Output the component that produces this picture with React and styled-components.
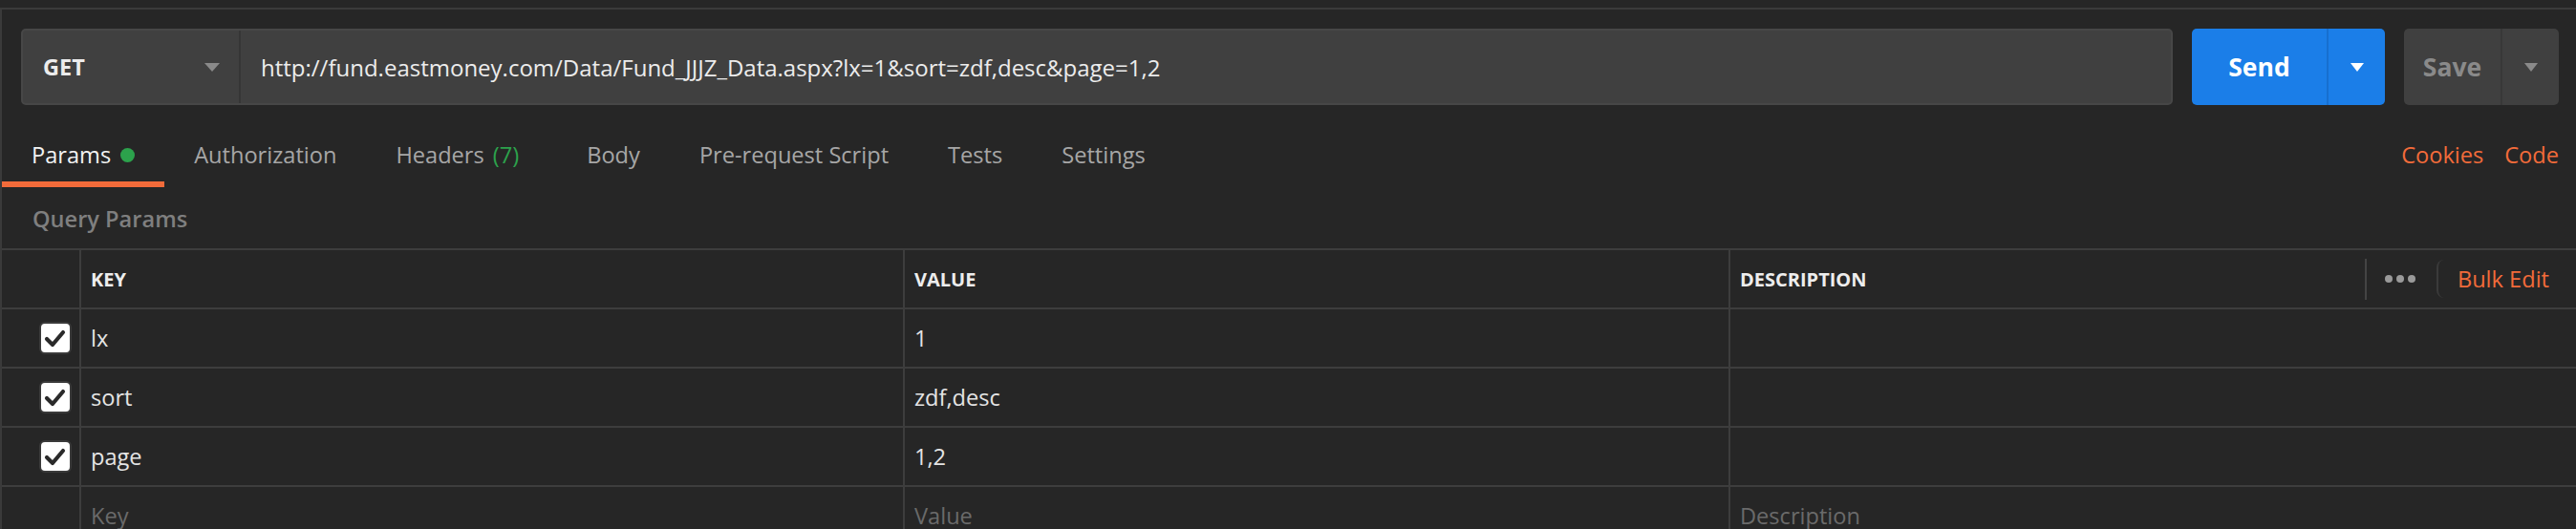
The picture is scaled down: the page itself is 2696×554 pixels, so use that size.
import React from "react";
import styled, { createGlobalStyle } from "styled-components";

const GlobalStyle = createGlobalStyle`
  html, body {
    margin: 0;
    padding: 0;
    background: #262626;
  }
  body {
    font-family: "Open Sans", "DejaVu Sans", sans-serif;
    color: #e6e6e6;
  }
`;

const orange = "#f26b3a";
const green = "#2ca24c";
const line = "#3d3d3d";

const Page = styled.div`
  padding-top: 8px;
  min-height: 554px;
  box-sizing: border-box;
`;

const Panel = styled.div`
  border-top: 2px solid #3a3a3a;
  border-left: 2px solid #3a3a3a;
`;

const RequestBar = styled.div`
  display: flex;
  align-items: stretch;
  gap: 20px;
  padding: 20px 18px 0 20px;
`;

const UrlGroup = styled.div`
  flex: 1;
  display: flex;
  height: 80px;
  box-sizing: border-box;
  background: #404040;
  border: 2px solid #474747;
  border-radius: 5px;
`;

const Method = styled.div`
  width: 228px;
  flex: none;
  display: flex;
  align-items: center;
  justify-content: space-between;
  box-sizing: border-box;
  padding: 0 20px 0 21px;
  border-right: 2px solid #363636;
  font-size: 23.5px;
  font-weight: 700;
  color: #ececec;
`;

const Caret = styled.span`
  width: 0;
  height: 0;
  border-left: ${(p) => p.$w / 2}px solid transparent;
  border-right: ${(p) => p.$w / 2}px solid transparent;
  border-top: 9px solid ${(p) => p.$color};
`;

const UrlText = styled.div`
  flex: 1;
  display: flex;
  align-items: center;
  padding-left: 21px;
  font-size: 24px;
  color: #ececec;
  white-space: nowrap;
  overflow: hidden;
`;

const SplitButton = styled.div`
  display: flex;
  height: 80px;
  border-radius: 5px;
  overflow: hidden;
  background: ${(p) => p.$bg};
`;

const MainPart = styled.div`
  width: ${(p) => p.$w}px;
  display: flex;
  align-items: center;
  justify-content: center;
  font-size: 26.5px;
  font-weight: 700;
  color: ${(p) => p.$color};
  border-right: 2px solid ${(p) => p.$divider};
`;

const CaretPart = styled.div`
  width: 59px;
  display: flex;
  align-items: center;
  justify-content: center;
`;

const TabRow = styled.div`
  display: flex;
  justify-content: space-between;
  padding-right: 18px;
`;

const Tabs = styled.div`
  display: flex;
`;

const Tab = styled.div`
  display: flex;
  align-items: center;
  padding: 37px 31px 13px;
  line-height: 30px;
  font-size: 23.6px;
  color: ${(p) => (p.$active ? "#f2f2f2" : "#a6a6a6")};
  border-bottom: 6px solid ${(p) => (p.$active ? orange : "transparent")};
`;

const Dot = styled.span`
  width: 15px;
  height: 15px;
  border-radius: 50%;
  background: ${green};
  margin-left: 10px;
`;

const Count = styled.span`
  color: ${green};
  margin-left: 9px;
  margin-right: 9px;
`;

const Links = styled.div`
  display: flex;
  gap: 22px;
  padding-top: 37px;
  line-height: 30px;
  font-size: 23.6px;
  color: ${orange};
`;

const SectionTitle = styled.div`
  padding: 18px 0 16px 32px;
  line-height: 30px;
  font-size: 23.6px;
  font-weight: 600;
  color: #7f7f7f;
`;

const Table = styled.div`
  border-top: 2px solid ${line};
`;

const Row = styled.div`
  display: grid;
  grid-template-columns: 83px 862px 864px 1fr;
  height: 62px;
  box-sizing: border-box;
  border-bottom: 2px solid ${line};
`;

const Cell = styled.div`
  display: flex;
  align-items: center;
  padding-left: 10px;
  box-sizing: border-box;
  border-right: 2px solid ${line};
  font-size: ${(p) => (p.$head ? "20px" : "23.6px")};
  font-weight: ${(p) => (p.$head ? 700 : 400)};
  color: ${(p) => (p.$muted ? "#6a6a6a" : p.$head ? "#ededed" : "#e4e4e4")};
  &:last-child {
    border-right: none;
  }
`;

const CheckCell = styled(Cell)`
  justify-content: flex-end;
  padding: 0 8px 0 0;
`;

const HeadActions = styled.div`
  margin-left: auto;
  display: flex;
  align-items: center;
  padding-right: 28px;
`;

const VDivider = styled.span`
  width: 2px;
  height: 43px;
  background: #444;
  margin-right: 19px;
`;

const Dots = styled.span`
  display: flex;
  gap: 4px;
  margin-right: 22px;
  span {
    width: 8px;
    height: 8px;
    border-radius: 50%;
    background: #9a9a9a;
  }
`;

const BulkEdit = styled.span`
  display: flex;
  align-items: center;
  height: 40px;
  padding-left: 20px;
  border-left: 2px solid #3a3a3a;
  border-radius: 8px 0 0 8px;
  font-size: 23.6px;
  font-weight: 400;
  color: ${orange};
`;

const Box = styled.span`
  width: 34px;
  height: 34px;
  box-sizing: border-box;
  border: 2px solid #3a3a3a;
  border-radius: 6px;
  background: #ffffff;
  display: flex;
  align-items: center;
  justify-content: center;
`;

const Checkbox = () => (
  <Box>
    <svg width="30" height="30" viewBox="0 0 30 30">
      <path
        d="M6 16 L12 22 L23 9"
        fill="none"
        stroke="#2a2a2a"
        strokeWidth="4.2"
        strokeLinecap="round"
        strokeLinejoin="round"
      />
    </svg>
  </Box>
);

const params = [
  { key: "lx", value: "1" },
  { key: "sort", value: "zdf,desc" },
  { key: "page", value: "1,2" },
];

const tabs = ["Authorization", "Headers", "Body", "Pre-request Script", "Tests", "Settings"];

export default function App() {
  return (
    <Page>
      <GlobalStyle />
      <Panel>
        <RequestBar>
          <UrlGroup>
            <Method>
              GET
              <Caret $w={16} $color="#8a8a8a" />
            </Method>
            <UrlText>http://fund.eastmoney.com/Data/Fund_JJJZ_Data.aspx?lx=1&amp;sort=zdf,desc&amp;page=1,2</UrlText>
          </UrlGroup>
          <SplitButton $bg="#1b7ee8">
            <MainPart $w={141} $color="#ffffff" $divider="#176fcf">
              Send
            </MainPart>
            <CaretPart>
              <Caret $w={15} $color="#ffffff" />
            </CaretPart>
          </SplitButton>
          <SplitButton $bg="#404040">
            <MainPart $w={101} $color="#8a8a8a" $divider="#383838">
              Save
            </MainPart>
            <CaretPart>
              <Caret $w={15} $color="#8a8a8a" />
            </CaretPart>
          </SplitButton>
        </RequestBar>

        <TabRow>
          <Tabs>
            <Tab $active>
              Params
              <Dot />
            </Tab>
            {tabs.map((t) => (
              <Tab key={t}>
                {t}
                {t === "Headers" && <Count>(7)</Count>}
              </Tab>
            ))}
          </Tabs>
          <Links>
            <span>Cookies</span>
            <span>Code</span>
          </Links>
        </TabRow>

        <SectionTitle>Query Params</SectionTitle>

        <Table>
          <Row>
            <Cell $head />
            <Cell $head>KEY</Cell>
            <Cell $head>VALUE</Cell>
            <Cell $head>
              DESCRIPTION
              <HeadActions>
                <VDivider />
                <Dots>
                  <span />
                  <span />
                  <span />
                </Dots>
                <BulkEdit>Bulk Edit</BulkEdit>
              </HeadActions>
            </Cell>
          </Row>
          {params.map((p) => (
            <Row key={p.key}>
              <CheckCell>
                <Checkbox />
              </CheckCell>
              <Cell>{p.key}</Cell>
              <Cell>{p.value}</Cell>
              <Cell />
            </Row>
          ))}
          <Row>
            <CheckCell />
            <Cell $muted>Key</Cell>
            <Cell $muted>Value</Cell>
            <Cell $muted>Description</Cell>
          </Row>
        </Table>
      </Panel>
    </Page>
  );
}
